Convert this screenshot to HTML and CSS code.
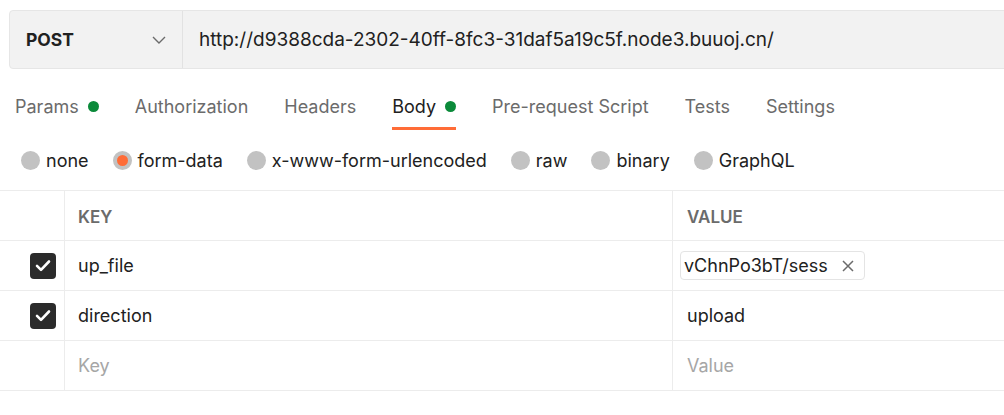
FILE: index.html
```html
<!DOCTYPE html>
<html>
<head>
<meta charset="utf-8">
<link rel="stylesheet" href="styles.css">
</head>
<body>
<div class="page">
  <div class="request-bar">
    <div class="method">
      <span class="method-name">POST</span>
      <svg class="chevron" width="14" height="8" viewBox="0 0 14 8"><path d="M1 1l6 6 6-6" fill="none" stroke="#6b6b6b" stroke-width="1.4"/></svg>
    </div>
    <div class="url">http://d9388cda-2302-40ff-8fc3-31daf5a19c5f.node3.buuoj.cn/</div>
  </div>

  <div class="tabs">
    <div class="tab">Params<span class="dot"></span></div>
    <div class="tab">Authorization</div>
    <div class="tab">Headers</div>
    <div class="tab active">Body<span class="dot"></span></div>
    <div class="tab">Pre-request Script</div>
    <div class="tab">Tests</div>
    <div class="tab">Settings</div>
  </div>

  <div class="radios">
    <div class="radio"><span class="circle"></span>none</div>
    <div class="radio"><span class="circle checked"></span>form-data</div>
    <div class="radio"><span class="circle"></span>x-www-form-urlencoded</div>
    <div class="radio"><span class="circle"></span>raw</div>
    <div class="radio"><span class="circle"></span>binary</div>
    <div class="radio"><span class="circle"></span>GraphQL</div>
  </div>

  <div class="table">
    <div class="row head">
      <div class="cell check"></div>
      <div class="cell key">KEY</div>
      <div class="cell value">VALUE</div>
    </div>
    <div class="row">
      <div class="cell check"><span class="box"><svg width="16" height="13" viewBox="0 0 16 13"><path d="M2 6.8l4 4L14 2.5" fill="none" stroke="#fff" stroke-width="2.6" stroke-linecap="round" stroke-linejoin="round"/></svg></span></div>
      <div class="cell key">up_file</div>
      <div class="cell value"><span class="chip">vChnPo3bT/sess<svg class="x" width="12" height="12" viewBox="0 0 12 12"><path d="M1 1l10 10M11 1L1 11" stroke="#6b6b6b" stroke-width="1.5"/></svg></span></div>
    </div>
    <div class="row">
      <div class="cell check"><span class="box"><svg width="16" height="13" viewBox="0 0 16 13"><path d="M2 6.8l4 4L14 2.5" fill="none" stroke="#fff" stroke-width="2.6" stroke-linecap="round" stroke-linejoin="round"/></svg></span></div>
      <div class="cell key">direction</div>
      <div class="cell value">upload</div>
    </div>
    <div class="row">
      <div class="cell check"></div>
      <div class="cell key placeholder">Key</div>
      <div class="cell value placeholder">Value</div>
    </div>
  </div>
</div>
</body>
</html>
```

FILE: styles.css
```css
html, body {
  margin: 0;
  padding: 0;
  background: #ffffff;
  overflow: hidden;
}

body {
  font-family: Inter, "Noto Sans", sans-serif;
  color: #212121;
  font-size: 18px;
}

.page {
  width: 1004px;
  height: 415px;
  overflow: hidden;
}

.request-bar {
  display: flex;
  margin: 10px -20px 0 9px;
  height: 57px;
  background: #f2f2f2;
  border: 1px solid #e6e6e6;
  border-radius: 4px;
}

.method {
  flex: none;
  display: flex;
  align-items: center;
  justify-content: space-between;
  padding: 0 16px 0 16px;
  border-right: 1px solid #e2e2e2;
  box-sizing: content-box;
  width: 140px;
}

.method-name {
  font-weight: 700;
  font-size: 17.5px;
  color: #212121;
}

.chevron {
  display: block;
}

.url {
  display: flex;
  align-items: center;
  padding-left: 16px;
  font-size: 19px;
  color: #212121;
}

.tabs {
  display: flex;
  gap: 36px;
  margin: 18px 0 0 15px;
}

.tab {
  display: flex;
  align-items: center;
  height: 39px;
  padding-bottom: 1px;
  color: #6b6b6b;
  font-size: 18px;
  border-bottom: 3px solid transparent;
}

.tab.active {
  color: #212121;
  border-bottom-color: #ff6c37;
}

.dot {
  width: 11px;
  height: 11px;
  border-radius: 50%;
  background: #0b8a3a;
  margin-left: 9px;
}

.radios {
  display: flex;
  gap: 24px;
  margin: 17px 0 0 21px;
  height: 26px;
  align-items: center;
}

.radio {
  display: flex;
  align-items: center;
  gap: 6px;
  font-size: 18px;
  color: #212121;
}

.circle {
  width: 19px;
  height: 19px;
  border-radius: 50%;
  background: #c2c2c2;
  box-sizing: border-box;
}

.circle.checked {
  background: #ff6c37;
  border: 4px solid #c2c2c2;
}

.table {
  margin-top: 17px;
  border-top: 1px solid #ececec;
}

.row {
  display: grid;
  grid-template-columns: 64px 608px 1fr;
  height: 49px;
  border-bottom: 1px solid #ececec;
}

.cell {
  display: flex;
  align-items: center;
  font-size: 18px;
}

.cell.key {
  border-left: 1px solid #ececec;
  padding-left: 13px;
}

.cell.value {
  border-left: 1px solid #ececec;
  padding-left: 14px;
}

.head .cell {
  font-size: 17px;
  font-weight: 600;
  color: #6b6b6b;
}

.head .cell.key, .head .cell.value {
  padding-top: 2px;
}

.check {
  justify-content: flex-end;
  padding-right: 8px;
}

.box {
  width: 26px;
  height: 26px;
  border-radius: 4px;
  background: #2b2b2b;
  display: flex;
  align-items: center;
  justify-content: center;
}

.chip {
  display: flex;
  align-items: center;
  height: 27px;
  margin-left: -7px;
  padding: 0 10px 0 3px;
  border: 1px solid #e4e4e4;
  border-radius: 4px;
  gap: 14px;
}

.x {
  display: block;
}

.placeholder {
  color: #a6a6a6;
}
```
